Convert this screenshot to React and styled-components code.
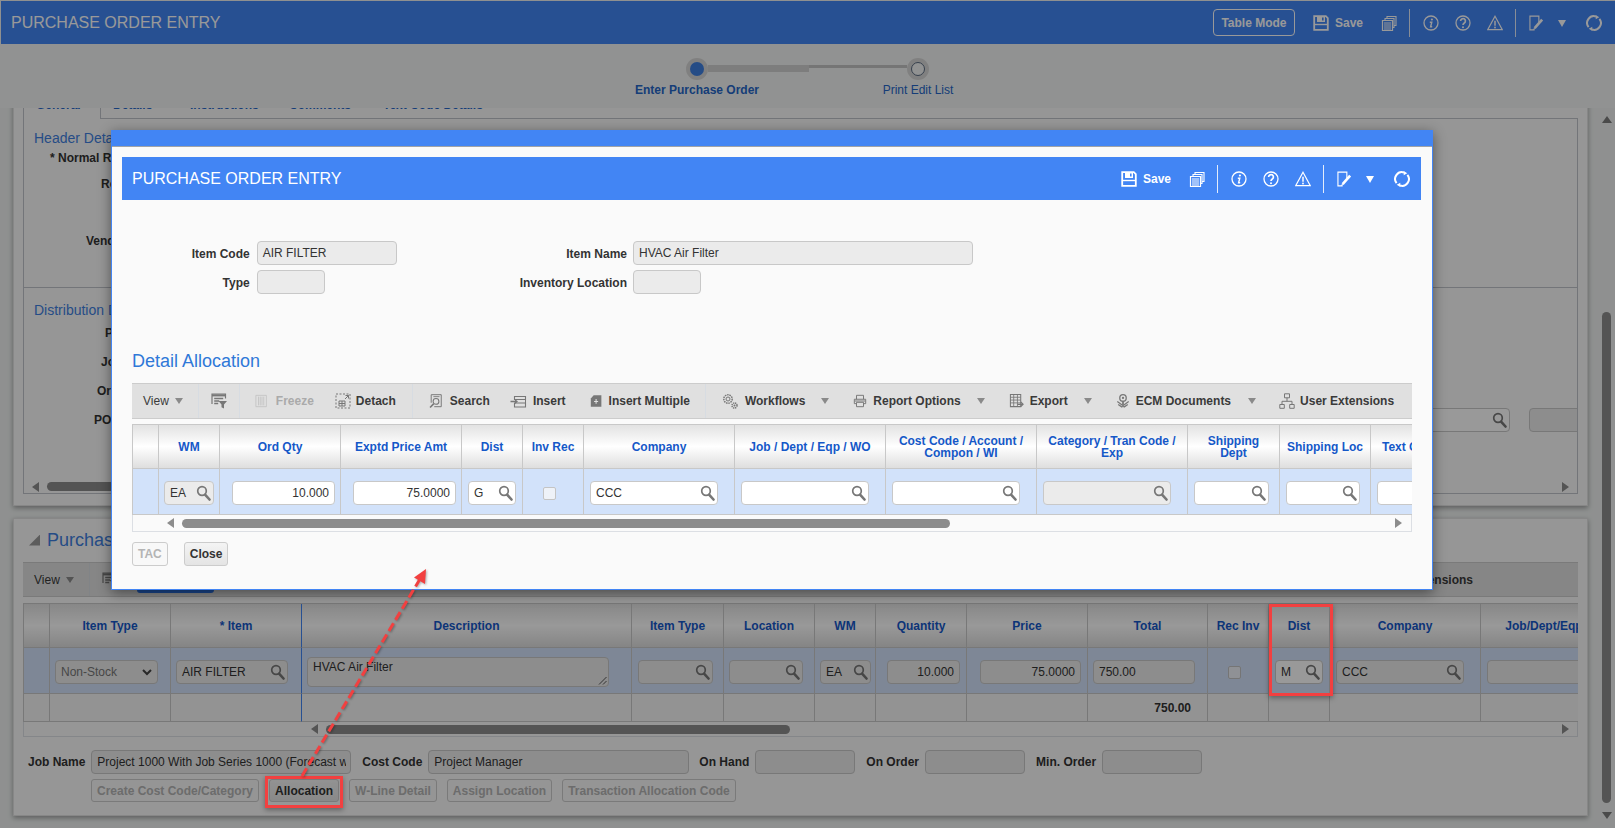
import React from 'react';
import styled, { createGlobalStyle } from 'styled-components';

const GlobalStyle = createGlobalStyle`
    html, body {
        margin: 0;
        padding: 0;
        background: #eef1f0;
        overflow: hidden;
    }
    body {
        font-family: "Liberation Sans", Arial, sans-serif;
        font-size: 12px;
        color: #333;
    }
`

const Screen = styled.div`
    position: relative;
    width: 1615px;
    height: 828px;
    overflow: hidden;
    background: #eef1f0;
`

/* icons */
const paths = {
    save: <>
        <path d="M1.2 1.2h11.600l2 2v11.600H1.200z" strokeWidth="1.800" />
        <path d="M4 1.500h8v5.500H4z" fill="currentColor" stroke="none" />
        <path d="M9 2.600h1.600v3H9z" fill="#4285f4" stroke="none" />
        <path d="M2 9.500h12" strokeWidth="1.400" />
    </>,
    docs: <>
        <path d="M6 3.500V1.500h9v9h-2" strokeWidth="1.100" />
        <path d="M4 5.500V3.500h9v9h-1" strokeWidth="1.100" />
        <path d="M1.500 5.500h10v10h-10z" strokeWidth="1.200" />
        <path d="M3 8h7M3 10h7M3 12h7M3 14h7" strokeWidth="1" />
    </>,
    info: <>
        <circle cx="8" cy="8" r="7" strokeWidth="1.300" />
        <circle cx="8.900" cy="4.500" r="1.100" fill="currentColor" stroke="none" />
        <path d="M6.800 7.200h2l-1.200 4.600h1.600" strokeWidth="1.400" />
    </>,
    help: <>
        <circle cx="8" cy="8" r="7" strokeWidth="1.300" />
        <path d="M5.600 6a2.400 2.400 0 1 1 3.700 2c-.9.600-1.300 1.100-1.300 2.100" strokeWidth="1.700" />
        <circle cx="8" cy="12.200" r="1" fill="currentColor" stroke="none" />
    </>,
    warn: <>
        <path d="M8 1.300 15.300 14.700H.7z" strokeWidth="1.200" />
        <path d="M8 5.800v5" strokeWidth="1.500" />
        <circle cx="8" cy="12.500" r=".9" fill="currentColor" stroke="none" />
    </>,
    edit: <>
        <path d="M6 15.300H1V.7h9.500v6.300" strokeWidth="1.200" />
        <path d="M6 13.500 14 4.500" strokeWidth="2.800" />
        <path d="M4.800 15.200 6 13.500" strokeWidth="1.200" />
    </>,
    refresh: <>
        <path d="M2.600 12.200A6.800 6.800 0 0 1 10 1.500" strokeWidth="2" />
        <path d="M13.400 3.800A6.800 6.800 0 0 1 6 14.500" strokeWidth="2" />
        <path d="M13.300 2.200 9.700 0v4.200zM2.700 13.800l3.600 2.200v-4.200z" fill="currentColor" stroke="none" />
    </>,
    filter: <>
        <path d="M1 11V1.200h13.500v4.300" strokeWidth="1.200" />
        <path d="M1 2.500h13.500" strokeWidth="1.800" />
        <path d="M3.200 5.500h9M3.200 8h5M3.200 10.500h4" strokeWidth="1.300" />
        <path d="M7.500 8h8.500L13 11.500v4l-2.500-1.200v-2.800z" fill="currentColor" stroke="none" />
    </>,
    freeze: <>
        <path d="M1 1.500h12v13H1z" strokeWidth="1" />
        <path d="M4 3v10M6 3v10M8 3v10M10 3v10" strokeWidth="1" />
    </>,
    detach: <>
        <path d="M1 1h14v14H1z" strokeWidth="1" strokeDasharray="2 1.500" />
        <path d="M10 6l3.500-3.500M10.500 2.500h3v3" strokeWidth="1" />
        <path d="M4 8h6v5H4zM4 10.500h6M7 8v5" strokeWidth="1" />
    </>,
    docsearch: <>
        <path d="M2.500 10V.8h11.500v13.700H6" strokeWidth="1.100" />
        <path d="M5 3h7" strokeWidth="1" />
        <circle cx="8" cy="8.500" r="3.300" strokeWidth="1.200" />
        <path d="M5.500 11 1.200 15.500" strokeWidth="1.800" />
    </>,
    insert: <>
        <path d="M4 3.500h11v3H4zM4 10h11v4H4z" strokeWidth="1.100" />
        <path d="M4 6.500h11v3.500" strokeWidth="1" />
        <path d="M0 8.500h5" strokeWidth="1.500" />
        <path d="M4.500 6v5l3-2.500z" fill="currentColor" stroke="none" />
    </>,
    multi: <>
        <path d="M4.500 1H14v14H1V5z" fill="currentColor" stroke="none" />
        <path d="M7.500 5.500v6M5 8.500h5" stroke="#e0e0e0" strokeWidth="1.300" />
    </>,
    gears: <>
        <circle cx="6" cy="6" r="4.200" strokeWidth="1.500" strokeDasharray="1.500 .8" />
        <circle cx="6" cy="6" r="2" strokeWidth="1" />
        <circle cx="12.500" cy="12.500" r="2.500" strokeWidth="1.500" strokeDasharray="1.300 .7" />
        <circle cx="12.500" cy="12.500" r="1" fill="currentColor" stroke="none" />
    </>,
    printer: <>
        <path d="M4 6V1.500h8V6" strokeWidth="1.100" />
        <path d="M1.500 11V6h13v5h-2" strokeWidth="1.100" />
        <path d="M1.500 11h2M4 9.500h8v5H4zM2 8h12" strokeWidth="1.100" />
    </>,
    sheet: <>
        <path d="M1.500 1h11v13h-11z" strokeWidth="1.100" />
        <path d="M1.500 4h11M1.500 7h11M1.500 10h11M5 1v13M9 1v13" strokeWidth=".9" />
        <path d="M9 11.500h6M12.500 9l2.500 2.500-2.500 2.500" strokeWidth="1.300" />
    </>,
    ecm: <>
        <circle cx="8" cy="4.500" r="3.700" strokeWidth="1.500" />
        <circle cx="8" cy="4.500" r="1.300" fill="currentColor" stroke="none" />
        <path d="M7 8h2v7H7z" fill="currentColor" stroke="none" />
        <path d="M1.500 8.500 7 12.500M14.500 8.500 9 12.500M2.500 12 7 15M13.500 12 9 15" strokeWidth="1.400" />
    </>,
    tree: <>
        <path d="M5.500 .8h5v4h-5zM.8 11.500h4.500v3.800H.8zM10.700 11.500h4.500v3.800h-4.500z" strokeWidth="1" />
        <path d="M8 4.800v3.500M3 11.500V8.300h10v3.200" strokeWidth="1" />
    </>,
};

const Glyph = ({ name, w = 16, h = 16 }) => (
    <svg width={w} height={h} viewBox="0 0 16 16" fill="none" stroke="currentColor">
        {paths[name]}
    </svg>
);

const GlyphBox = styled.span`
    display: flex;
    flex: none;
    margin-left: ${p => p.$ml || 0}px;
    color: ${p => p.$color || 'inherit'};
`

const Lens = styled.svg`
    flex: none;
    color: #777;
`

const SearchGlyph = () => (
    <Lens width="15" height="16" viewBox="0 0 15 16" fill="none" stroke="currentColor">
        <circle cx="6" cy="6" r="4.300" strokeWidth="1.700" />
        <path d="M9.300 9.800 13.500 14.500" strokeWidth="2.600" strokeLinecap="round" />
    </Lens>
);

/* header bars */
const TopBar = styled.header`
    display: flex;
    align-items: center;
    justify-content: space-between;
    height: 43px;
    margin: 1px 0 0 1px;
    padding: 0 13px 0 10px;
    background: #4285f4;
    color: #fff;
`

const ModalBar = styled(TopBar)`
    margin: 0;
    padding: 0 11px 0 10px;
`

const Title = styled.div`
    font-size: 16px;
`

const Actions = styled.div`
    display: flex;
    align-items: center;
`

const ActionText = styled.span`
    margin-left: 6px;
    font-weight: bold;
`

const ActionSep = styled.span`
    width: 1px;
    height: 28px;
    margin: 0 13px 0 12px;
    background: #e3ecfb;
`

const DownCaret = styled.span`
    flex: none;
    width: 0;
    height: 0;
    margin-left: ${p => p.$ml || 0}px;
    margin-top: ${p => (p.$big ? 2 : 0)}px;
    border-style: solid;
    border-width: ${p => (p.$big ? '7px 4.500px 0' : '6px 4.500px 0')};
    border-color: ${p => p.$color || '#8a8a8a'} transparent transparent;
`

const TableModeBtn = styled.button`
    width: 82px;
    height: 27px;
    margin-right: 18px;
    padding: 0;
    border: 1px solid #fff;
    border-radius: 4px;
    background: transparent;
    color: #fff;
    font: bold 12px "Liberation Sans", Arial, sans-serif;
`

const HeaderActions = () => (
    <Actions>
        <Glyph name="save" />
        <ActionText>Save</ActionText>
        <GlyphBox $ml={18}><Glyph name="docs" /></GlyphBox>
        <ActionSep />
        <Glyph name="info" />
        <GlyphBox $ml={16}><Glyph name="help" /></GlyphBox>
        <GlyphBox $ml={16}><Glyph name="warn" /></GlyphBox>
        <ActionSep />
        <Glyph name="edit" w={15} />
        <DownCaret $ml={14} $big $color="#fff" />
        <GlyphBox $ml={20}><Glyph name="refresh" /></GlyphBox>
    </Actions>
);

/* stepper */
const Stepper = styled.section`
    height: 64px;
    padding-top: 14px;
    box-sizing: border-box;
    background: #f2f4f3;
`

const TrackRow = styled.div`
    display: flex;
    justify-content: center;
    height: 22px;
`

const Knob = styled.span`
    display: flex;
    align-items: center;
    justify-content: center;
    width: 22px;
    height: 22px;
    border-radius: 50%;
    background: #d6d6d6;
`

const KnobDot = styled.span`
    box-sizing: border-box;
    width: 14px;
    height: 14px;
    border-radius: 50%;
    border: ${p => (p.$active ? 'none' : '1px solid #5a6a80')};
    background: ${p => (p.$active ? '#3f7fe0' : '#f2f4f3')};
`

const Bar = styled.span`
    width: ${p => p.$w}px;
    height: ${p => p.$h}px;
    margin-top: 7px;
    background: ${p => p.$bg};
`

const StepLabels = styled.div`
    display: grid;
    grid-template-columns: 221px 221px;
    justify-content: center;
    margin-top: 3px;
    line-height: 14px;
    text-align: center;
    color: #2566c8;
`

const StepLabel = styled.span`
    font-weight: ${p => (p.$active ? 'bold' : 'normal')};
`

/* page body */
const Body = styled.div`
    display: flex;
    height: 720px;
    overflow: hidden;
`

const Main = styled.main`
    flex: none;
    box-sizing: border-box;
    width: 1588px;
    padding-left: 13px;
`

const VScroll = styled.div`
    display: flex;
    flex-direction: column;
    align-items: center;
    width: 27px;
    padding-left: 10px;
    box-sizing: border-box;
`

const VThumb = styled.div`
    width: 9px;
    height: 491px;
    margin: 189px 0 9px;
    border-radius: 5px;
    background: #8c8c8c;
`

const UpArrow = styled.span`
    margin-top: 8px;
    border-style: solid;
    border-width: 0 5px 7px;
    border-color: transparent transparent #7c7c7c;
`

const DownArrow = styled.span`
    border-style: solid;
    border-width: 7px 5px 0;
    border-color: #7c7c7c transparent transparent;
`

const Panel = styled.section`
    box-sizing: border-box;
    margin-top: ${p => p.$top}px;
    padding: 0 9px ${p => p.$bottom}px;
    border: 1px solid #e2e2e2;
    background: #fafafa;
    box-shadow: 0 2px 5px rgba(0, 0, 0, .35);
`

const TabStrip = styled.div`
    display: flex;
    align-items: stretch;
    box-sizing: border-box;
    height: 29px;
    margin-top: 11px;
    border-bottom: 1px solid #c0c4ca;
`

const Tab = styled.span`
    flex: none;
    display: flex;
    align-items: center;
    box-sizing: border-box;
    width: ${p => (p.$w ? `${p.$w}px` : 'auto')};
    padding: 2px 0 0 12px;
    font-weight: bold;
    color: #2566c8;
    ${p => p.$active && `
        border: 1px solid #c0c4ca;
        border-width: 0 1px;
        margin-bottom: -1px;
        padding-bottom: 1px;
        background: #fafafa;
    `}
`

const Frame = styled.div`
    height: 375px;
    overflow: hidden;
    border: 1px solid #c0c4ca;
    border-top: 0;
    box-sizing: border-box;
`

const FrameSection = styled.div`
    display: flow-root;
    height: ${p => p.$h}px;
    box-sizing: border-box;
    border-bottom: ${p => (p.$line ? '1px solid #c0c4ca' : '0')};
`

const SectionTitle = styled.h3`
    margin: ${p => p.$top}px 0 0 10px;
    font-size: 14px;
    font-weight: normal;
    line-height: 16px;
    color: #3f7fe0;
`

const SideLabel = styled.div`
    margin: ${p => p.$top}px 0 0 ${p => p.$left}px;
    line-height: 14px;
    font-weight: bold;
    white-space: nowrap;
`

const FieldRow = styled.div`
    display: flex;
    align-items: center;
    height: 24px;
    margin-top: 10px;
    padding-left: 70px;
`

const RowLabel = styled.span`
    flex: none;
    font-weight: bold;
    white-space: nowrap;
`

const RowFields = styled.div`
    flex: none;
    display: flex;
    gap: 19px;
    margin: 0 -12px 0 auto;
`

const Field = styled.div`
    flex: ${p => (p.$w ? 'none' : '1 1 auto')};
    display: flex;
    align-items: ${p => (p.$tall ? 'flex-start' : 'center')};
    justify-content: ${p => (p.$right ? 'flex-end' : 'space-between')};
    box-sizing: border-box;
    width: ${p => (p.$w ? `${p.$w}px` : 'auto')};
    min-width: 0;
    height: ${p => (p.$tall ? 30 : 24)}px;
    padding: ${p => (p.$tall ? '2px 1px 1px 5px' : p.$right ? '0 5px' : '0 2px 0 5px')};
    overflow: hidden;
    border: 1px solid #c8c8c8;
    border-radius: 4px;
    background: ${p => (p.$off ? '#ebebeb' : '#fff')};
    color: #333;
    white-space: nowrap;
`

const ClippedText = styled.span`
    flex: 1;
    min-width: 0;
    margin-right: 2px;
    overflow: hidden;
`

const MutedText = styled.span`
    color: #777;
`

const ChevronIcon = styled.svg`
    flex: none;
    margin-right: 3px;
    color: #444;
`

const Chevron = () => (
    <ChevronIcon width="10" height="7" viewBox="0 0 10 7" fill="none" stroke="currentColor" strokeWidth="2">
        <path d="M1 1l4 4 4-4" />
    </ChevronIcon>
);

const Grip = styled.svg`
    flex: none;
    align-self: flex-end;
    color: #555;
`

const ResizeGrip = () => (
    <Grip width="9" height="9" viewBox="0 0 9 9" fill="none" stroke="currentColor">
        <path d="M1 8.500 8.500 1M5 8.500 8.500 5" />
    </Grip>
);

/* horizontal scroll */
const HScroll = styled.div`
    display: flex;
    align-items: center;
    box-sizing: border-box;
    height: ${p => p.$h}px;
    margin-top: ${p => p.$top || 0}px;
    padding: 0 ${p => p.$right}px 0 ${p => p.$left}px;
    background: ${p => p.$bg || 'transparent'};
    ${p => p.$line && 'border: 1px solid #dcdfe4; border-top: 0;'}
`

const ArrowLeft = styled.span`
    flex: none;
    border-style: solid;
    border-width: 5px 7px 5px 0;
    border-color: transparent #8c8c8c transparent transparent;
`

const ArrowRight = styled.span`
    flex: none;
    margin-left: auto;
    border-style: solid;
    border-width: 5px 0 5px 7px;
    border-color: transparent transparent transparent #8c8c8c;
`

const Thumb = styled.span`
    flex: none;
    width: ${p => p.$w}px;
    height: 9px;
    margin-left: ${p => p.$ml}px;
    border-radius: 5px;
    background: #8c8c8c;
`

/* toolbar */
const Toolbar = styled.div`
    position: relative;
    display: flex;
    align-items: center;
    box-sizing: border-box;
    height: ${p => p.$h}px;
    margin-top: ${p => p.$top}px;
    padding-left: 11px;
    overflow: hidden;
    border-top: 1px solid #ccc;
    border-bottom: 1px solid #ccc;
    background: #e0e0e0;
    white-space: nowrap;
`

const Tool = styled.span`
    flex: none;
    display: flex;
    align-items: center;
    gap: ${p => p.$gap || 6}px;
    margin-left: ${p => p.$ml || 0}px;
    font-weight: ${p => (p.$plain ? 'normal' : 'bold')};
    color: ${p => (p.$off ? '#aaa' : '#3a3a3a')};
    svg { color: ${p => (p.$off ? '#c4c4c4' : '#777')}; }
`

const ToolSep = styled.span`
    flex: none;
    width: 1px;
    height: 34px;
    margin-left: ${p => p.$ml}px;
    background: #d7dce2;
`

const BlueAction = styled.span`
    flex: none;
    align-self: flex-end;
    width: 77px;
    height: 24px;
    margin: 0 0 3px 19px;
    border-radius: 3px;
    background: #2b74e8;
`

const EndTool = styled(Tool)`
    margin-left: auto;
    margin-right: 105px;
`

/* grid table */
const Grid = styled.div`
    display: grid;
    grid-template-columns: ${p => p.$cols};
    margin-top: ${p => p.$top}px;
    overflow: hidden;
    border: 1px solid #c8c8c8;
    border-width: 1px 0 0 1px;
`

const HeadCell = styled.div`
    display: flex;
    align-items: center;
    justify-content: center;
    box-sizing: border-box;
    height: 44px;
    padding: 0 6px;
    border-right: 1px solid ${p => (p.$edge ? '#4285f4' : '#c8c8c8')};
    border-bottom: 1px solid #c8c8c8;
    background: linear-gradient(#e2e2e2, #fff 50%, #dedede);
    color: #1558c8;
    font-weight: bold;
    line-height: 12px;
    text-align: center;
    white-space: ${p => (p.$clip ? 'nowrap' : 'normal')};
`

const Cell = styled.div`
    display: flex;
    align-items: center;
    justify-content: ${p => (p.$center ? 'center' : 'flex-start')};
    box-sizing: border-box;
    height: ${p => p.$h || 46}px;
    padding: ${p => (p.$h ? 0 : 3)}px ${p => p.$pr || 0}px 0 ${p => p.$pl || 0}px;
    border-right: 1px solid ${p => (p.$edge ? '#4285f4' : '#c8c8c8')};
    border-bottom: 1px solid #c8c8c8;
    background: ${p => p.$bg || '#d2e2fa'};
    overflow: hidden;
`

const TotalValue = styled.span`
    margin-left: auto;
    font-weight: bold;
`

const Check = styled.span`
    box-sizing: border-box;
    width: 13px;
    height: 13px;
    margin-left: ${p => p.$ml || 0}px;
    border: 1px solid #c4c4c4;
    border-radius: 2px;
    background: #eef2f8;
`

const Btn = styled.button`
    flex: none;
    height: ${p => p.$h || 23}px;
    padding: 0 5px;
    border: 1px solid #ccc;
    border-radius: 3px;
    background: ${p => (p.$off ? '#f8f8f8' : 'linear-gradient(#f4f4f4, #e4e4e4)')};
    color: ${p => (p.$off ? '#b4b4b4' : '#333')};
    font: bold 12px "Liberation Sans", Arial, sans-serif;
`

/* panel 2 */
const PanelHeading = styled.div`
    display: flex;
    align-items: center;
    gap: 7px;
    height: 18px;
    margin-top: 12px;
    padding-left: 6px;
    font-size: 18px;
    color: #3f7fe0;
`

const Corner = styled.span`
    width: 11px;
    height: 11px;
    background: #999;
    clip-path: polygon(100% 0, 100% 100%, 0 100%);
`

const JobRow = styled.div`
    display: flex;
    align-items: center;
    margin-top: 13px;
    padding-left: 5px;
`

const JobLabel = styled.span`
    flex: none;
    margin: 0 6px 0 ${p => p.$ml || 0}px;
    font-weight: bold;
`

const BtnRow = styled.div`
    display: flex;
    gap: 10px;
    margin-top: 5px;
    padding-left: 68px;
`

/* modal */
const Overlay = styled.div`
    position: absolute;
    inset: 0;
    background: rgba(0, 0, 0, .4);
`

const Modal = styled.div`
    position: absolute;
    left: 111px;
    top: 130px;
    box-sizing: border-box;
    width: 1322px;
    height: 460px;
    border: 1px solid #4285f4;
    border-top: 0;
    background: #fafafa;
    box-shadow: 0 3px 12px rgba(0, 0, 0, .45);
`

const ModalStrip = styled.div`
    height: 16px;
    border-bottom: 1px solid #9fa3a8;
    background: #4285f4;
`

const ModalBody = styled.div`
    padding: 10px 11px 0 10px;
`

const ModalContent = styled.div`
    width: 1280px;
    margin-left: 10px;
`

const ItemGrid = styled.div`
    display: grid;
    grid-template-columns: 124.7px 140.3px 236px 340.5px;
    grid-auto-rows: 24px;
    row-gap: 5px;
    margin-top: 41px;
`

const ItemLabel = styled.label`
    align-self: center;
    padding: 1px ${p => p.$pr || 6}px 0 0;
    font-weight: bold;
    text-align: right;
`

const ShortField = styled(Field)`
    width: 68px;
    flex: none;
`

const SectionHeading = styled.h2`
    margin: 57px 0 0;
    font-size: 18px;
    font-weight: normal;
    line-height: 20px;
    color: #2f78d8;
`

const ModalButtons = styled.div`
    display: flex;
    gap: 16px;
    margin-top: 10px;
`

/* annotations */
const RedBox = styled.div`
    position: absolute;
    box-sizing: border-box;
    border: 3px solid #f24040;
    box-shadow: 0 2px 5px rgba(0, 0, 0, .35);
`

const DistMark = styled(RedBox)`
    left: 1269px;
    top: 604px;
    width: 64px;
    height: 92px;
`

const AllocationMark = styled(RedBox)`
    left: 265px;
    top: 776px;
    width: 78px;
    height: 32px;
`

const ArrowLayer = styled.svg`
    position: absolute;
    left: 0;
    top: 0;
    pointer-events: none;
    filter: drop-shadow(1px 1px 1px rgba(0, 0, 0, .3));
`

const modalColumns = [
    { label: '' },
    { label: 'WM', value: 'EA', off: true, search: true, pl: 5, pr: 5, w: 61 },
    { label: 'Ord Qty', value: '10.000', right: true, pl: 12, pr: 5, w: 121 },
    { label: 'Exptd Price Amt', value: '75.0000', right: true, pl: 12, pr: 5, w: 121 },
    { label: 'Dist', value: 'G', search: true, pl: 6, pr: 6, w: 61 },
    { label: 'Inv Rec', check: true, w: 61 },
    { label: 'Company', value: 'CCC', search: true, pl: 6, pr: 16, w: 151 },
    { label: 'Job / Dept / Eqp / WO', value: '', search: true, pl: 6, pr: 16, w: 151 },
    { label: 'Cost Code / Account / Compon / WI', value: '', search: true, pl: 6, pr: 16, w: 151 },
    { label: 'Category / Tran Code / Exp', value: '', off: true, search: true, pl: 6, pr: 16, w: 151 },
    { label: <>Shipping<br />Dept</>, value: '', search: true, pl: 6, pr: 10, w: 92 },
    { label: 'Shipping Loc', value: '', search: true, pl: 6, pr: 10, w: 91 },
    { label: 'Text Code', value: '', pl: 6, pr: 0, w: 80, clip: true },
];

const ModalTable = () => (
    <Grid $top={5} $cols="26px 61px 121px 121px 61px 61px 151px 151px 151px 151px 92px 91px 80px">
        {modalColumns.map((c, i) => <HeadCell key={i} $clip={c.clip}>{c.label}</HeadCell>)}
        {modalColumns.map((c, i) => (
            <Cell key={i} $pl={c.pl} $pr={c.pr} $center={c.check}>
                {c.check && <Check $ml={-8} />}
                {c.w && !c.check && (
                    <Field $off={c.off} $right={c.right}>
                        <span>{c.value}</span>
                        {c.search && <SearchGlyph />}
                    </Field>
                )}
            </Cell>
        ))}
    </Grid>
);

const pageColumns = '26px 121px 131px 330px 92px 91px 61px 91px 121px 120px 61px 61px 151px 151px';

const pageHeads = ['', 'Item Type', '* Item', 'Description', 'Item Type', 'Location', 'WM', 'Quantity', 'Price', 'Total', 'Rec Inv', 'Dist', 'Company', 'Job/Dept/Eqp/WO'];

const PageTable = () => (
    <Grid $top={6} $cols={pageColumns}>
        {pageHeads.map((h, i) => <HeadCell key={i} $edge={i === 2} $clip={i === 13}>{h}</HeadCell>)}
        <Cell />
        <Cell $pl={5} $pr={12}>
            <Field $off><MutedText>Non-Stock</MutedText><Chevron /></Field>
        </Cell>
        <Cell $pl={5} $pr={13} $edge>
            <Field $off><span>AIR FILTER</span><SearchGlyph /></Field>
        </Cell>
        <Cell $pl={5} $pr={22}>
            <Field $tall $off><span>HVAC Air Filter</span><ResizeGrip /></Field>
        </Cell>
        <Cell $pl={6} $pr={10}><Field $off><span /><SearchGlyph /></Field></Cell>
        <Cell $pl={5} $pr={11}><Field $off><span /><SearchGlyph /></Field></Cell>
        <Cell $pl={5} $pr={4}><Field $off><span>EA</span><SearchGlyph /></Field></Cell>
        <Cell $pl={11} $pr={6}><Field $off $right>10.000</Field></Cell>
        <Cell $pl={13} $pr={6}><Field $off $right>75.0000</Field></Cell>
        <Cell $pl={5} $pr={12}><Field $off>750.00</Field></Cell>
        <Cell $center><Check $ml={-7} /></Cell>
        <Cell $pl={6} $pr={6}><Field><span>M</span><SearchGlyph /></Field></Cell>
        <Cell $pl={6} $pr={16}><Field $off><span>CCC</span><SearchGlyph /></Field></Cell>
        <Cell $pl={6}><Field $off /></Cell>
        {pageHeads.map((h, i) => (
            <Cell key={i} $h={28} $bg="#f6f6f6" $edge={i === 2} $pr={h === 'Total' ? 16 : 0}>
                {h === 'Total' && <TotalValue>750.00</TotalValue>}
            </Cell>
        ))}
    </Grid>
);

const App = () => (
    <Screen>
        <GlobalStyle />

        <TopBar>
            <Title>PURCHASE ORDER ENTRY</Title>
            <Actions>
                <TableModeBtn>Table Mode</TableModeBtn>
                <HeaderActions />
            </Actions>
        </TopBar>

        <Stepper>
            <TrackRow>
                <Knob><KnobDot $active /></Knob>
                <Bar $w={101} $h={7} $bg="#d0d0d0" />
                <Bar $w={98} $h={3} $bg="#c4c4c4" />
                <Knob><KnobDot /></Knob>
            </TrackRow>
            <StepLabels>
                <StepLabel $active>Enter Purchase Order</StepLabel>
                <StepLabel>Print Edit List</StepLabel>
            </StepLabels>
        </Stepper>

        <Body>
            <Main>
                <Panel $top={-30} $bottom={11}>
                    <TabStrip>
                        <Tab $active $w={78}>General</Tab>
                        <Tab $w={77}>Details</Tab>
                        <Tab $w={99}>Instructions</Tab>
                        <Tab $w={94}>Comments</Tab>
                        <Tab>Text Code Details</Tab>
                    </TabStrip>
                    <Frame>
                        <FrameSection $h={169} $line>
                            <SectionTitle $top={11}>Header Details</SectionTitle>
                            <SideLabel $top={5} $left={26}>* Normal Rate</SideLabel>
                            <SideLabel $top={12} $left={77}>Rep</SideLabel>
                            <SideLabel $top={43} $left={62}>Vendor</SideLabel>
                        </FrameSection>
                        <FrameSection $h={205}>
                            <SectionTitle $top={14}>Distribution Details</SectionTitle>
                            <SideLabel $top={8} $left={81}>Phase</SideLabel>
                            <SideLabel $top={15} $left={77}>Job</SideLabel>
                            <SideLabel $top={15} $left={73}>Order</SideLabel>
                            <FieldRow>
                                <RowLabel>PO Type</RowLabel>
                                <RowFields>
                                    <Field $w={200}><span /><SearchGlyph /></Field>
                                    <Field $w={60} $off />
                                </RowFields>
                            </FieldRow>
                            <HScroll $h={15} $top={47} $left={8} $right={8}>
                                <ArrowLeft />
                                <Thumb $w={1100} $ml={8} />
                                <ArrowRight />
                            </HScroll>
                        </FrameSection>
                    </Frame>
                </Panel>

                <Panel $top={12} $bottom={13}>
                    <PanelHeading><Corner />Purchase Order Details</PanelHeading>
                    <Toolbar $h={35} $top={13}>
                        <Tool $plain $gap={6}>View <DownCaret /></Tool>
                        <ToolSep $ml={15} />
                        <GlyphBox $ml={12}><Tool><Glyph name="filter" /></Tool></GlyphBox>
                        <BlueAction />
                        <EndTool><Glyph name="tree" />User Extensions</EndTool>
                    </Toolbar>
                    <PageTable />
                    <HScroll $h={15} $line $left={287} $right={8}>
                        <ArrowLeft />
                        <Thumb $w={464} $ml={8} />
                        <ArrowRight />
                    </HScroll>
                    <JobRow>
                        <JobLabel>Job Name</JobLabel>
                        <Field $w={260} $off>
                            <ClippedText>Project 1000 With Job Series 1000 (Forecast with Phases)</ClippedText>
                        </Field>
                        <JobLabel $ml={11}>Cost Code</JobLabel>
                        <Field $w={261} $off>Project Manager</Field>
                        <JobLabel $ml={10}>On Hand</JobLabel>
                        <Field $w={100} $off />
                        <JobLabel $ml={11}>On Order</JobLabel>
                        <Field $w={100} $off />
                        <JobLabel $ml={11}>Min. Order</JobLabel>
                        <Field $w={100} $off />
                    </JobRow>
                    <BtnRow>
                        <Btn $off>Create Cost Code/Category</Btn>
                        <Btn>Allocation</Btn>
                        <Btn $off>W-Line Detail</Btn>
                        <Btn $off>Assign Location</Btn>
                        <Btn $off>Transaction Allocation Code</Btn>
                    </BtnRow>
                </Panel>
            </Main>
            <VScroll>
                <UpArrow />
                <VThumb />
                <DownArrow />
            </VScroll>
        </Body>

        <Overlay />

        <Modal>
            <ModalStrip />
            <ModalBody>
                <ModalBar>
                    <Title>PURCHASE ORDER ENTRY</Title>
                    <HeaderActions />
                </ModalBar>
                <ModalContent>
                    <ItemGrid>
                        <ItemLabel $pr={7}>Item Code</ItemLabel>
                        <Field $off>AIR FILTER</Field>
                        <ItemLabel>Item Name</ItemLabel>
                        <Field $off>HVAC Air Filter</Field>
                        <ItemLabel $pr={7}>Type</ItemLabel>
                        <ShortField $off />
                        <ItemLabel>Inventory Location</ItemLabel>
                        <ShortField $off />
                    </ItemGrid>
                    <SectionHeading>Detail Allocation</SectionHeading>
                    <Toolbar $h={36} $top={12}>
                        <Tool $plain>View <DownCaret /></Tool>
                        <ToolSep $ml={15} />
                        <GlyphBox $ml={12}><Tool><Glyph name="filter" /></Tool></GlyphBox>
                        <ToolSep $ml={12} />
                        <Tool $off $ml={15} $gap={7}><Glyph name="freeze" w={14} />Freeze</Tool>
                        <Tool $ml={21} $gap={5}><Glyph name="detach" />Detach</Tool>
                        <ToolSep $ml={16} />
                        <Tool $ml={16} $gap={7}><Glyph name="docsearch" w={14} />Search</Tool>
                        <Tool $ml={20}><Glyph name="insert" w={17} />Insert</Tool>
                        <Tool $ml={24} $gap={6}><Glyph name="multi" w={13} />Insert Multiple</Tool>
                        <ToolSep $ml={15} />
                        <Tool $ml={15} $gap={6}><Glyph name="gears" w={18} />Workflows</Tool>
                        <DownCaret $ml={16} />
                        <Tool $ml={24}><Glyph name="printer" w={14} />Report Options</Tool>
                        <DownCaret $ml={16} />
                        <Tool $ml={24}><Glyph name="sheet" w={15} />Export</Tool>
                        <DownCaret $ml={16} />
                        <Tool $ml={24}><Glyph name="ecm" w={14} />ECM Documents</Tool>
                        <DownCaret $ml={17} />
                        <Tool $ml={23} $gap={5}><Glyph name="tree" />User Extensions</Tool>
                    </Toolbar>
                    <ModalTable />
                    <HScroll $h={17} $line $left={34} $right={9}>
                        <ArrowLeft />
                        <Thumb $w={768} $ml={8} />
                        <ArrowRight />
                    </HScroll>
                    <ModalButtons>
                        <Btn $off $h={24}>TAC</Btn>
                        <Btn $h={24}>Close</Btn>
                    </ModalButtons>
                </ModalContent>
            </ModalBody>
        </Modal>

        <DistMark />
        <AllocationMark />
        <ArrowLayer width="1615" height="828" viewBox="0 0 1615 828">
            <path d="M302 776 420 579" fill="none" stroke="#f24040" strokeWidth="3" strokeDasharray="9 4" />
            <path d="M426 569 425 584 414 577.500z" fill="#f24040" />
        </ArrowLayer>
    </Screen>
);

export default App;
